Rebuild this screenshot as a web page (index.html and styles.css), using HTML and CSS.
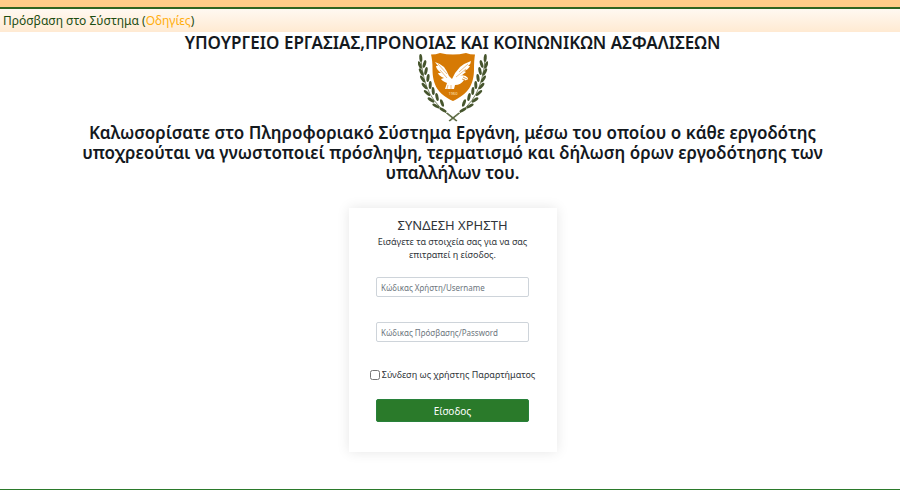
FILE: index.html
```html
<!DOCTYPE html>
<html lang="el">
<head>
  <meta charset="UTF-8">
  <meta name="viewport" content="width=device-width, initial-scale=1">
  <title>Εργάνη</title>
  <link rel="stylesheet" href="styles.css">
</head>
<body>

  <header class="topbar">
    Πρόσβαση στο Σύστημα (<a href="#">Οδηγίες</a>)
  </header>

  <main class="content">
    <h1 class="title">ΥΠΟΥΡΓΕΙΟ ΕΡΓΑΣΙΑΣ,ΠΡΟΝΟΙΑΣ ΚΑΙ ΚΟΙΝΩΝΙΚΩΝ ΑΣΦΑΛΙΣΕΩΝ</h1>

    <svg class="emblem" viewBox="0 1 70 70" aria-hidden="true">
      <defs>
        <ellipse id="leaf" rx="1.5" ry="4"/>
        <g id="branch">
          <path d="M3 8 Q5 29 12 42 T38 69" fill="none" stroke="#59683f" stroke-width=".8"/>
          <g fill="#46552d">
            <use href="#leaf" transform="translate(2.8 6) rotate(-5)"/>
            <use href="#leaf" transform="translate(1.8 13) rotate(-20)"/>
            <use href="#leaf" transform="translate(6.5 12) rotate(16)"/>
            <use href="#leaf" transform="translate(3.2 20) rotate(-28)"/>
            <use href="#leaf" transform="translate(8 19) rotate(12)"/>
            <use href="#leaf" transform="translate(4.6 27) rotate(-32)"/>
            <use href="#leaf" transform="translate(10 26) rotate(8)"/>
            <use href="#leaf" transform="translate(6.5 34) rotate(-40)"/>
            <use href="#leaf" transform="translate(12.2 33) rotate(2)"/>
            <use href="#leaf" transform="translate(9 41) rotate(-48)"/>
            <use href="#leaf" transform="translate(15.2 39) rotate(-5)"/>
            <use href="#leaf" transform="translate(13 48) rotate(-55)"/>
            <use href="#leaf" transform="translate(19 45) rotate(-12)"/>
            <use href="#leaf" transform="translate(18 54) rotate(-62)"/>
            <use href="#leaf" transform="translate(24 51) rotate(-20)"/>
            <use href="#leaf" transform="translate(25 58) rotate(-60)"/>
          </g>
          <path d="M29 61 L39 69" stroke="#59683f" stroke-width="1.2"/>
        </g>
      </defs>
      <use href="#branch"/>
      <use href="#branch" transform="translate(70 0) scale(-1 1)"/>
      <path d="M13 2.5 Q18 2.5 22 1 Q35 4 48 1 Q52 2.5 57 2.5 Q56 8 56 17 C56 33 50 42 35 49 C20 42 14.500 33 14.500 17 Q14.500 8 13 2.500Z" fill="#d67a05"/>
      <path d="M17 10 Q23 12 26 15 Q29 19 31 24 L34 27 Q37 20 42 15 Q47 11 53 9 Q53 12 50 14 L52 14 Q50 18 46 19 L48 20 Q45 23 41 24 Q47 22 50 26 Q50 29 46 28 Q43 33 37 33 L36 37 L27 37 L29 31 Q24 29 23 27 L26 26 Q21 24 20 21 L23 21 Q18 17 18 14 L20 14Z" fill="#fff"/>
      <path d="M20 12 L29 22 M22 18 L29 26 M50 12 L41 20 M48 17 L38 25 M30 33 L29 37 M33 33 L33 37" stroke="#df963d" stroke-width=".6" fill="none"/>
      <path d="M45 25 L49 27 M44 27 L47 28" stroke="#d67a05" stroke-width=".7"/>
      <text class="emblem-year" x="35" y="43" text-anchor="middle">1960</text>
    </svg>

    <h2 class="welcome">Καλωσορίσατε στο Πληροφοριακό Σύστημα Εργάνη, μέσω του οποίου ο κάθε εργοδότης υποχρεούται να γνωστοποιεί πρόσληψη, τερματισμό και δήλωση όρων εργοδότησης των υπαλλήλων του.</h2>

    <form class="login">
      <h3 class="login-title">ΣΥΝΔΕΣΗ ΧΡΗΣΤΗ</h3>
      <p class="login-text">Εισάγετε τα στοιχεία σας για να σας επιτραπεί η είσοδος.</p>
      <input class="field" type="text" aria-label="Κώδικας Χρήστη" placeholder="Κώδικας Χρήστη/Username">
      <input class="field" type="password" aria-label="Κώδικας Πρόσβασης" placeholder="Κώδικας Πρόσβασης/Password">
      <div class="branch-user">
        <input type="checkbox" id="branch-user">
        <label for="branch-user">Σύνδεση ως χρήστης Παραρτήματος</label>
      </div>
      <button class="submit" type="submit">Είσοδος</button>
    </form>
  </main>

</body>
</html>
```

FILE: styles.css
```css
* {
  box-sizing: border-box;
}

body {
  margin: 0;
  min-height: 100vh;
  display: flex;
  flex-direction: column;
  background: #fff;
  border-bottom: 1px solid #2b7a2b;
  color: #14191e;
  font-family: "Noto Sans", "Open Sans", sans-serif;
}

.topbar {
  height: 32px;
  padding-left: 3px;
  border-top: 7px solid #ffcc88;
  background: linear-gradient(#fffaf4, #ffead2);
  box-shadow: inset 0 2px #2f6420;
  color: #1d4d12;
  font-size: 12px;
  line-height: 27px;
}

.topbar a {
  color: #ffae0d;
  text-decoration: none;
}

.content {
  padding: 1px 0 0 5px;
  display: flex;
  flex-direction: column;
  align-items: center;
}

.title,
.welcome {
  margin: 0;
  font-size: 17px;
  font-weight: 600;
  line-height: 20px;
  text-align: center;
}

.emblem {
  width: 70px;
  height: 70px;
}

.emblem-year {
  fill: #ffe2ba;
  font-size: 4px;
}

.welcome {
  max-width: 760px;
}

.login {
  width: 208px;
  margin: 25px 0 30px;
  padding: 8px 16px 30px;
  display: flex;
  flex-direction: column;
  align-items: center;
  background: #fff;
  box-shadow: 0 0 12px rgba(0, 0, 0, 0.1);
  color: #30353a;
}

.login-title {
  margin: 0;
  font-size: 13px;
  font-weight: 400;
  line-height: 18px;
}

.login-text {
  margin: 1px 0 16px;
  font-size: 9px;
  line-height: 13px;
  text-align: center;
}

.field {
  width: 153px;
  height: 20px;
  margin-bottom: 25px;
  padding: 0 4px;
  border: 1px solid #ced4da;
  border-radius: 2px;
  font-family: inherit;
  font-size: 8px;
}

.field::placeholder {
  color: #6c757d;
}

.branch-user {
  display: flex;
  align-items: center;
  gap: 2px;
  margin: 1px 0 18px;
  font-size: 9px;
  line-height: 13px;
  white-space: nowrap;
}

.branch-user input {
  width: 10px;
  height: 10px;
  margin: 0;
}

.submit {
  width: 153px;
  height: 23px;
  padding: 0;
  border: 1px solid #28813a;
  border-radius: 2px;
  background: #2a7a2a;
  color: #fff;
  font-family: inherit;
  font-size: 10px;
}
```
